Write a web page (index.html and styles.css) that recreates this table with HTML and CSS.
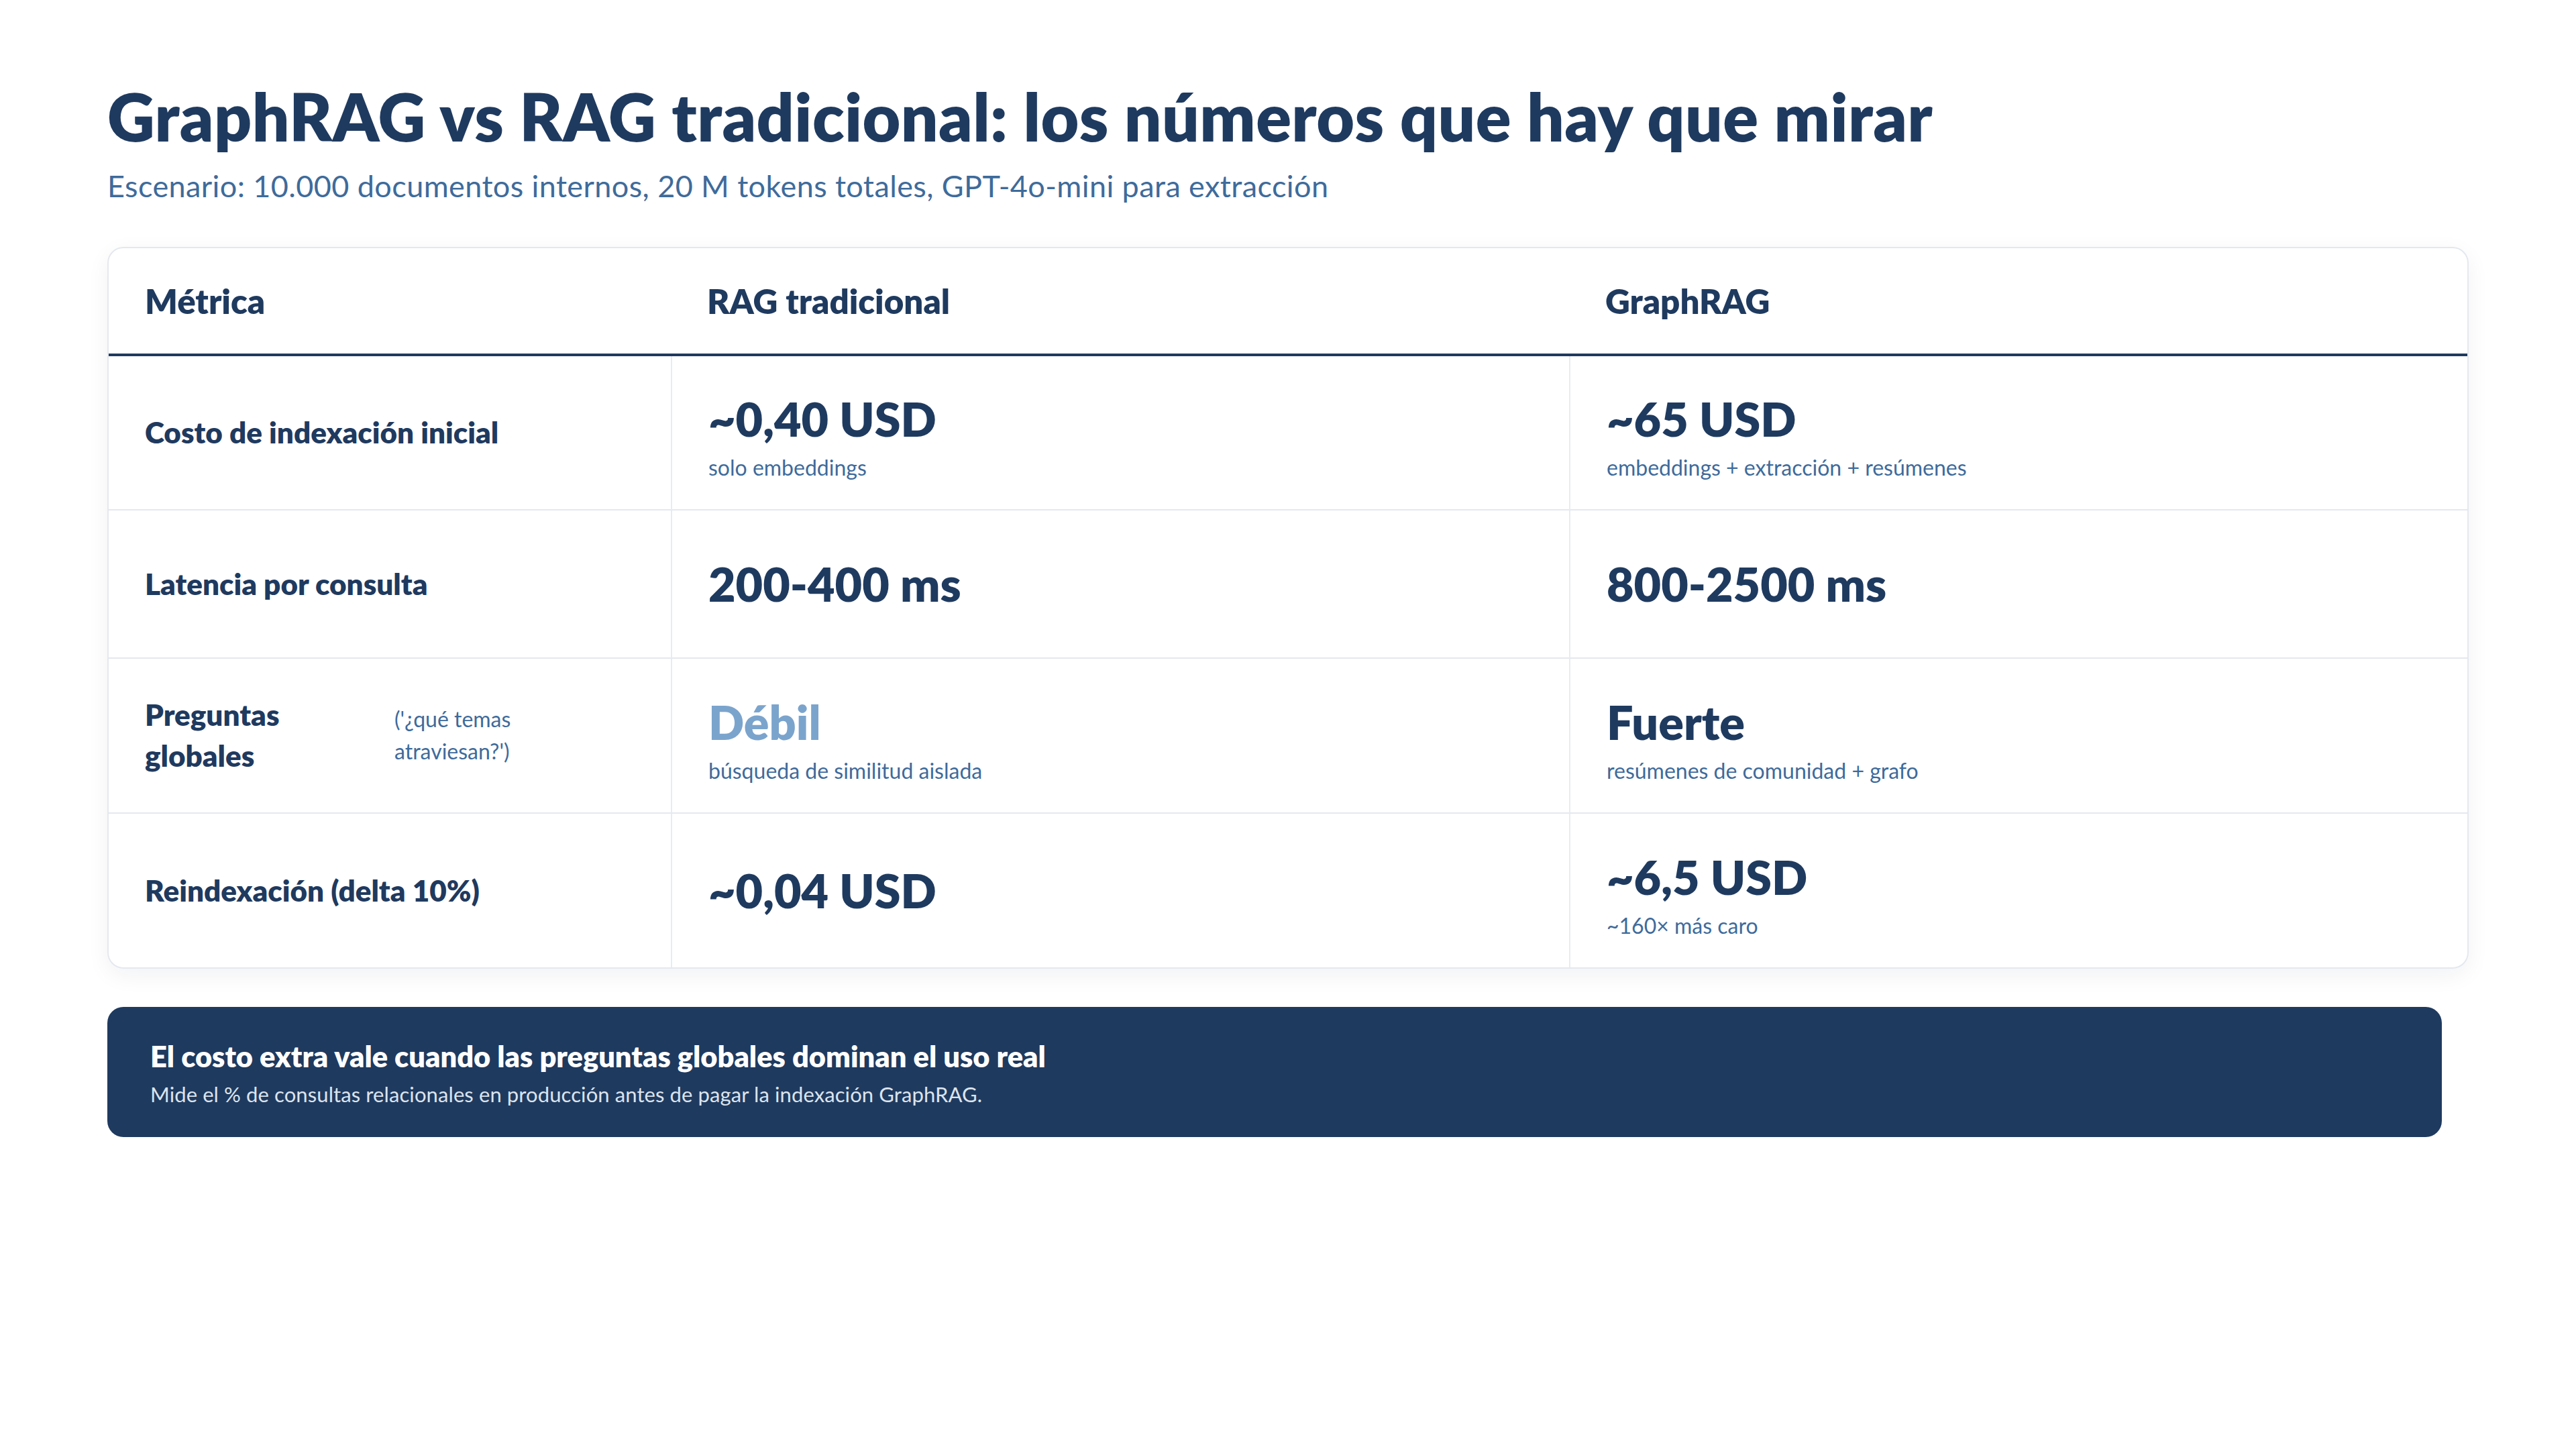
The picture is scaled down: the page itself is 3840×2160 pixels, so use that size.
FILE: index.html
```html
<!DOCTYPE html>
<html lang="es">
<head>
<meta charset="utf-8">
<title>GraphRAG vs RAG tradicional</title>
<link rel="stylesheet" href="styles.css">
</head>
<body>
<main class="page">
  <header class="intro">
    <h1 class="title">GraphRAG vs RAG tradicional: los números que hay que mirar</h1>
    <p class="subtitle">Escenario: 10.000 documentos internos, 20 M tokens totales, GPT-4o-mini para extracción</p>
  </header>

  <section class="card">
    <div class="grid">
      <div class="cell head">Métrica</div>
      <div class="cell head">RAG tradicional</div>
      <div class="cell head">GraphRAG</div>

      <div class="cell label r1">Costo de indexación inicial</div>
      <div class="cell val stack r1 divided"><span class="big">~0,40 USD</span><span class="sub">solo embeddings</span></div>
      <div class="cell val stack r1 divided"><span class="big">~65 USD</span><span class="sub">embeddings + extracción + resúmenes</span></div>

      <div class="cell label r2">Latencia por consulta</div>
      <div class="cell val r2 divided"><span class="big">200-400 ms</span></div>
      <div class="cell val r2 divided"><span class="big">800-2500 ms</span></div>

      <div class="cell label r3 with-note"><span class="name">Preguntas globales</span><span class="note">('¿qué temas atraviesan?')</span></div>
      <div class="cell val stack r3 divided"><span class="big weak">Débil</span><span class="sub">búsqueda de similitud aislada</span></div>
      <div class="cell val stack r3 divided"><span class="big">Fuerte</span><span class="sub">resúmenes de comunidad + grafo</span></div>

      <div class="cell label r4 last">Reindexación (delta 10%)</div>
      <div class="cell val r4 last divided"><span class="big">~0,04 USD</span></div>
      <div class="cell val stack r4 last divided"><span class="big">~6,5 USD</span><span class="sub">~160× más caro</span></div>
    </div>
  </section>

  <aside class="banner">
    <p class="banner-title">El costo extra vale cuando las preguntas globales dominan el uso real</p>
    <p class="banner-sub">Mide el % de consultas relacionales en producción antes de pagar la indexación GraphRAG.</p>
  </aside>
</main>
</body>
</html>
```

FILE: styles.css
```css
* { box-sizing: border-box; }
html, body { margin: 0; padding: 0; background: #ffffff; }
body {
  font-family: Lato, "Noto Sans", "Liberation Sans", sans-serif;
  color: #1f3a5f;
  width: 3840px;
  height: 2160px;
  overflow: hidden;
}
.page {
  padding: 115px 160px 0 160px;
}
.intro { margin: 0; }
.title {
  margin: 0;
  font-size: 98px;
  line-height: 1.2;
  font-weight: 800;
  color: #1f3a5f;
  letter-spacing: 0.4px;
}
.subtitle {
  margin: 17px 0 0 0;
  font-size: 45px;
  line-height: 1.2;
  font-weight: 400;
  color: #3e6b9b;
  letter-spacing: 0.4px;
}
.card {
  margin-top: 64px;
  border: 2px solid #e4e8ee;
  border-radius: 24px;
  background: #ffffff;
  box-shadow: 0 10px 34px rgba(20, 40, 70, 0.06);
  overflow: hidden;
}
.grid {
  display: grid;
  grid-template-columns: 838px 1fr 1fr;
  grid-template-rows: 161px 230px 221px 231px 229px;
}
.cell {
  display: flex;
  flex-direction: column;
  justify-content: center;
  padding: 0 54px;
  border-bottom: 2px solid #e4e8ee;
}
.cell.stack { padding-top: 10px; }
.cell.last { border-bottom: none; }
.cell.divided { border-left: 2px solid #e8ecf1; }
.head {
  font-size: 51px;
  font-weight: 800;
  line-height: 1.2;
  border-bottom: 4px solid #1f3a5f;
}
.label {
  font-size: 44px;
  font-weight: 800;
  line-height: 1.38;
}
.with-note {
  flex-direction: row;
  align-items: center;
  justify-content: flex-start;
  gap: 28px;
}
.with-note .name { flex: 0 0 344px; }
.note {
  flex: 0 0 220px;
  font-size: 32px;
  font-weight: 400;
  line-height: 1.5;
  color: #3e6b9b;
}
.big {
  font-size: 70px;
  font-weight: 800;
  line-height: 1.2;
  color: #1f3a5f;
}
.big.weak { color: #7ba4cd; }
.sub {
  margin-top: 12px;
  font-size: 32px;
  line-height: 1.2;
  font-weight: 400;
  color: #3e6b9b;
}
.banner {
  margin: 57px 40px 0 0;
  background: #1f3a5f;
  border-radius: 24px;
  padding: 47px 64px 45px 64px;
  color: #ffffff;
}
.banner-title {
  margin: 0;
  font-size: 43.4px;
  font-weight: 800;
  line-height: 1.2;
}
.banner-sub {
  margin: 13px 0 0 0;
  font-size: 31px;
  font-weight: 400;
  line-height: 1.2;
  color: #dce4ee;
  letter-spacing: 0.1px;
}
```
